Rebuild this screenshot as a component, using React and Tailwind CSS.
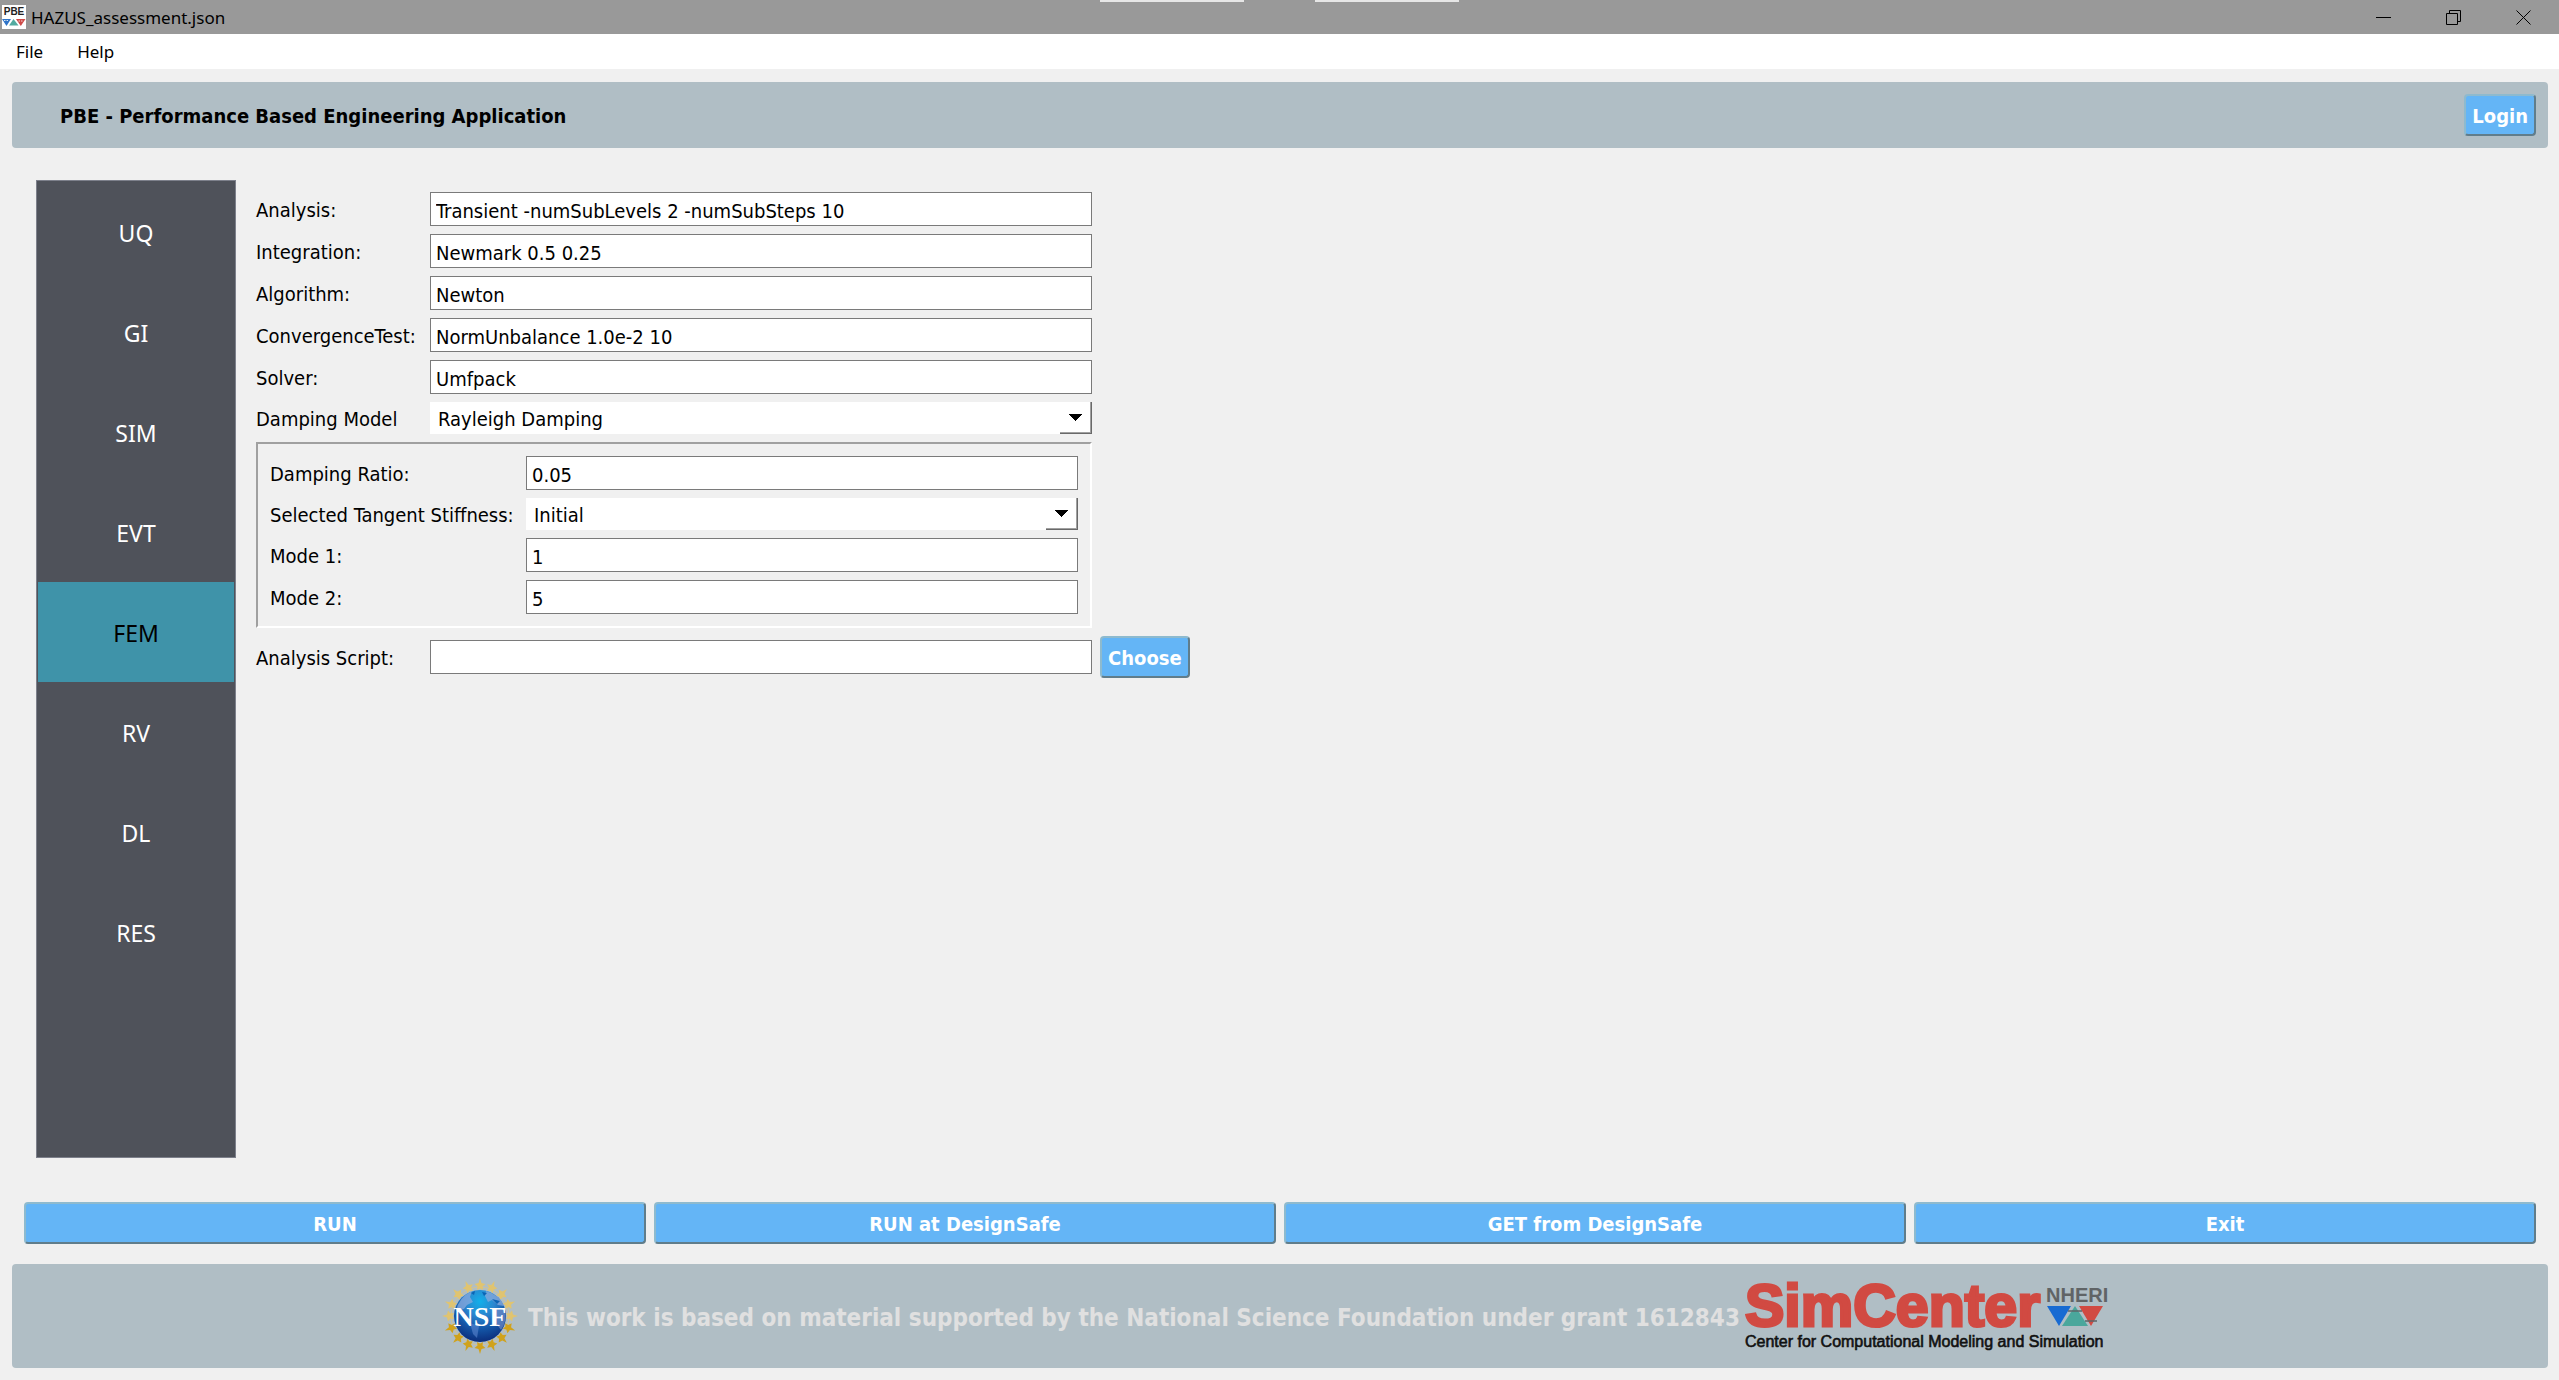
import React, { useState } from "react";

const inputClass =
  "h-[34px] w-full min-w-0 border border-[#7a7a7a] bg-white px-[5px] pt-1 text-black outline-none";

const raised =
  "rounded border-2 border-t-[#8ebace] border-l-[#8ebace] border-r-[#607d8b] border-b-[#607d8b] bg-[#64b5f6] pt-0.5 font-bold text-white";

function TextRow({ id, label, value }) {
  const [text, setText] = useState(value);
  return (
    <>
      <label htmlFor={id} className="pt-px whitespace-nowrap">{label}</label>
      <input id={id} type="text" value={text} onChange={(e) => setText(e.target.value)} className={inputClass} />
    </>
  );
}

function SelectRow({ id, label, options }) {
  return (
    <>
      <label htmlFor={id} className="pt-px whitespace-nowrap">{label}</label>
      <div className="relative h-8">
        <select id={id} className="h-8 w-full appearance-none bg-white pt-px pr-8 pl-2 text-black outline-none">
          {options.map((o) => (
            <option key={o}>{o}</option>
          ))}
        </select>
        <span className="pointer-events-none absolute inset-y-0 right-0 w-8 border-r border-b border-[#696969]">
          <span className="flex h-full w-full items-center justify-center border-r border-b border-[#a0a0a0]">
            <svg width="13" height="7" viewBox="0 0 13 7" shapeRendering="crispEdges">
              <path d="M0 0H13L6.5 7Z" fill="#000" />
            </svg>
          </span>
        </span>
      </div>
    </>
  );
}

function AppIcon() {
  return (
    <svg width="24" height="24" viewBox="0 0 24 24" className="shrink-0">
      <rect width="24" height="24" fill="#fff" />
      <text x="12" y="10" textAnchor="middle" fontSize="10" fontWeight="700" fontFamily="Liberation Sans, sans-serif" fill="#222">PBE</text>
      <path d="M0 14H9L4.5 21Z" fill="#2f74c8" />
      <path d="M7 20.500L11.500 14L16.500 20.500Z" fill="#53aaa0" />
      <path d="M14 14H23.500L18.800 21Z" fill="#cf4a48" />
      <path d="M2 15.500H6M16.500 16H21" stroke="#fff" strokeWidth="0.800" strokeDasharray="1.500 1" />
    </svg>
  );
}

function NsfLogo() {
  const stars = Array.from({ length: 16 }, (_, i) => i * 22.5);
  return (
    <svg width="76" height="76" viewBox="0 0 76 76" className="shrink-0" role="img" aria-label="NSF">
      <defs>
        <radialGradient id="globe" cx="0.5" cy="0.22" r="0.8">
          <stop offset="0" stopColor="#12b0ea" />
          <stop offset="0.350" stopColor="#2b86cf" />
          <stop offset="0.650" stopColor="#1457a8" />
          <stop offset="1" stopColor="#0b2a78" />
        </radialGradient>
      </defs>
      <circle cx="38" cy="38" r="29" fill="none" stroke="#d3c390" strokeWidth="1" />
      {stars.map((a) => (
        <path
          key={a}
          d="M38 0L39.500 5L43.500 6L40.500 8.500L41 12L38 10.500L35 12L35.500 8.500L32.500 6L36.500 5Z"
          fill={Math.abs(a - 180) < 90 ? "#d0a21c" : "#e0c470"}
          transform={`rotate(${a} 38 38)`}
        />
      ))}
      <circle cx="38" cy="38" r="26" fill="url(#globe)" />
      <path d="M14 33Q17 19 30 13L28 19L31 24L25 27L22 31Z" fill="#8aa9dc" opacity="0.750" />
      <path d="M44 13Q58 17 62 28L56 27L50 22L46 24L43 18Z" fill="#8aa9dc" opacity="0.750" />
      <path d="M50 30L63 32Q65 44 59 52L53 44Z" fill="#7f96cf" opacity="0.600" />
      <path d="M28 45L37 48L35 60L31 56Z" fill="#5b86cf" opacity="0.600" />
      <path d="M29 15L33 13L32 17ZM40 14L45 15L42 18ZM50 21L58 23L55 26Z" fill="#0b64b4" />
      <text x="38" y="48" textAnchor="middle" fontFamily="Liberation Serif, serif" fontWeight="700" fontSize="28" fill="#fff">NSF</text>
    </svg>
  );
}

function SimCenterLogo() {
  return (
    <svg width="366" height="92" viewBox="0 -8 366 92" className="shrink-0" role="img" aria-label="SimCenter, Center for Computational Modeling and Simulation">
      <text x="1" y="48" fontFamily="Liberation Sans, sans-serif" fontWeight="700" fontSize="59" fill="#d14a42" stroke="#d14a42" strokeWidth="3">SimCenter</text>
      <text x="302" y="24" fontFamily="Liberation Sans Narrow, Liberation Sans, sans-serif" fontWeight="700" fontSize="20" fill="#606466">NHERI</text>
      <path d="M303 28H327L315 48Z" fill="#176bd2" />
      <path d="M318 48L331 28L344 48Z" fill="#4aa79c" />
      <path d="M335 28H359L347 48Z" fill="#d14a42" />
      <path d="M324 33H338M341 43H353" stroke="#5d6668" strokeWidth="1.500" />
      <text x="1" y="69" fontFamily="Liberation Sans, sans-serif" fontSize="16" fill="#111" stroke="#111" strokeWidth="0.600">Center for Computational Modeling and Simulation</text>
    </svg>
  );
}

const windowButtons = [
  { name: "Minimize", d: "M0 7.500H15" },
  { name: "Restore", d: "M0.500 3.500H11.500V14.500H0.500ZM3.500 3.500V0.500H14.500V11.500H11.500" },
  { name: "Close", d: "M0.500 0.500L14.500 14.500M14.500 0.500L0.500 14.500" },
];

const sections = ["UQ", "GI", "SIM", "EVT", "FEM", "RV", "DL", "RES"];
const actions = ["RUN", "RUN at DesignSafe", "GET from DesignSafe", "Exit"];

export default function App() {
  const [active, setActive] = useState("FEM");
  return (
    <div className="flex min-h-screen flex-col bg-[#f0f0f0] pb-3 font-['DejaVu_Sans_Condensed','DejaVu_Sans',sans-serif] text-xl leading-6 text-black">
      <header className="font-['Noto_Sans',sans-serif] text-[17px]">
        <div className="relative flex h-[34px] items-center bg-[#999999] pr-px pl-0.5">
          <AppIcon />
          <span className="ml-[5px] flex-1 pt-0.5">HAZUS_assessment.json</span>
          <span className="absolute top-0 left-[43%] h-0.5 w-36 bg-[#e6e6e6]" />
          <span className="absolute top-0 left-[51.4%] h-0.5 w-36 bg-[#e6e6e6]" />
          {windowButtons.map((b) => (
            <button key={b.name} type="button" aria-label={b.name} className="flex h-full w-[70px] items-center justify-center">
              <svg width="15" height="15" viewBox="0 0 15 15" fill="none" stroke="#000">
                <path d={b.d} />
              </svg>
            </button>
          ))}
        </div>
        <nav className="flex h-[35px] items-center gap-[34px] bg-white px-4">
          <button type="button">File</button>
          <button type="button">Help</button>
        </nav>
      </header>

      <div className="mt-[13px] mr-[11px] ml-3 flex h-[66px] items-center justify-between rounded bg-[#b0bec5] pr-3 pl-12">
        <h1 className="pt-0.5 font-bold">PBE - Performance Based Engineering Application</h1>
        <button type="button" className={`${raised} h-[42px] px-1.5`}>Login</button>
      </div>

      <main className="mx-9 mt-8 mb-11 flex flex-1 gap-5">
        <nav className="flex w-[200px] shrink-0 flex-col border border-[#7d808b] bg-[#4f525a] p-px font-['Noto_Sans',sans-serif] text-[23px]">
          {sections.map((s) => (
            <button
              key={s}
              type="button"
              onClick={() => setActive(s)}
              className={s === active ? "h-[100px] bg-[#3f93a9] pt-0.5 text-black" : "h-[100px] pt-0.5 text-white"}
            >
              {s}
            </button>
          ))}
        </nav>

        <form className="mt-3 grid grid-cols-[166px_662px_auto] content-start items-center gap-2" onSubmit={(e) => e.preventDefault()}>
          <div className="col-span-2 grid grid-cols-subgrid items-center gap-y-2">
            <TextRow id="analysis" label="Analysis:" value="Transient -numSubLevels 2 -numSubSteps 10" />
            <TextRow id="integration" label="Integration:" value="Newmark 0.5 0.25" />
            <TextRow id="algorithm" label="Algorithm:" value="Newton" />
            <TextRow id="convergence" label="ConvergenceTest:" value="NormUnbalance 1.0e-2 10" />
            <TextRow id="solver" label="Solver:" value="Umfpack" />
            <SelectRow id="damping" label="Damping Model" options={["Rayleigh Damping", "Modal Damping"]} />
          </div>
          <fieldset className="col-span-2 col-start-1 grid grid-cols-[248px_1fr] items-center gap-2 border-2 border-t-[#a0a0a0] border-r-white border-b-white border-l-[#a0a0a0] p-3">
            <TextRow id="ratio" label="Damping Ratio:" value="0.05" />
            <SelectRow id="stiffness" label="Selected Tangent Stiffness:" options={["Initial", "Current", "Committed"]} />
            <TextRow id="mode1" label="Mode 1:" value="1" />
            <TextRow id="mode2" label="Mode 2:" value="5" />
          </fieldset>
          <label htmlFor="script" className="col-start-1 pt-px">Analysis Script:</label>
          <input id="script" type="text" className={inputClass} />
          <button type="button" className={`${raised} h-[42px] px-1.5`}>Choose</button>
        </form>
      </main>

      <div className="mr-[23px] ml-6 grid grid-cols-4 gap-2">
        {actions.map((a) => (
          <button key={a} type="button" className={`${raised} h-[42px]`}>{a}</button>
        ))}
      </div>

      <footer className="mt-5 mr-[11px] ml-3 flex h-[104px] items-center justify-center gap-1 rounded bg-[#b0bec5] pr-2">
        <NsfLogo />
        <p className="pt-1 pl-1.5 text-2xl font-bold text-[#e0e0e0]">
          This work is based on material supported by the National Science Foundation under grant 1612843
        </p>
        <SimCenterLogo />
      </footer>
    </div>
  );
}
